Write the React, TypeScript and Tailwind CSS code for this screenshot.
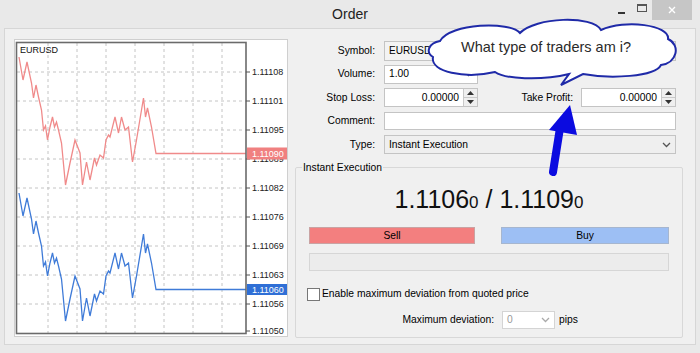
import React from "react";

const FONT = { fontFamily: '"Liberation Sans", Arial, sans-serif' };

// price path of the red (ask) line, in page pixels
const RED: [number, number][] = [
  [19, 57], [23, 80], [27, 62], [31.5, 83], [33.5, 98], [36, 85], [38.5, 97], [41.5, 110],
  [43.5, 130], [45.5, 126], [47.5, 140], [50, 127], [52.5, 117], [54.5, 127], [56.5, 122],
  [58.5, 130], [61.5, 143], [65.5, 185], [70, 163], [75, 140], [80, 153], [82.5, 185],
  [86.5, 162], [90, 180], [94.5, 158], [96.5, 165], [100, 155], [103.5, 158], [106, 140],
  [108.5, 135], [110, 137], [115, 117], [118.5, 133], [121.5, 117], [125, 130], [128.5, 127],
  [132.5, 162], [136.5, 140], [143.5, 98], [145.5, 117], [147.5, 108], [151.5, 127],
  [156, 153.5], [246, 153.5],
];
const toPts = (dy: number) => RED.map(([x, y]) => `${x},${y + dy}`).join(" ");

const GRID_X = [48, 77, 106, 135, 164, 193, 222];
const LABELS: [string, number][] = [
  ["1.11108", 72], ["1.11101", 101], ["1.11095", 130], ["1.11089", 159], ["1.11082", 188],
  ["1.11076", 217], ["1.11069", 246], ["1.11063", 275], ["1.11056", 304],
];

function Chart() {
  return (
    <div className="w-[274px] h-[298px] border border-[#cfcfcf] bg-white">
      <svg width="272" height="296" viewBox="15 40 272 296" style={FONT}>
        {GRID_X.map((x) => (
          <line key={x} x1={x} y1={43} x2={x} y2={333} stroke="#c4c4c4" strokeDasharray="3 3" />
        ))}
        {LABELS.map(([, y]) => (
          <line key={y} x1={17} y1={y} x2={246} y2={y} stroke="#c4c4c4" strokeDasharray="3 3" />
        ))}
        <polyline points={toPts(0)} fill="none" stroke="#f08a8a" strokeWidth="1.3" />
        <polyline points={toPts(136)} fill="none" stroke="#3f7bd8" strokeWidth="1.3" />
        <rect x="16.5" y="42.5" width="229.5" height="291" fill="none" stroke="#6b6b6b" strokeWidth="1.6" />
        {LABELS.map(([t, y]) => (
          <g key={t}>
            <line x1={246} y1={y} x2={250} y2={y} stroke="#555" />
            <text x={252} y={y + 3} fontSize="9" fill="#222">{t}</text>
          </g>
        ))}
        <line x1={246} y1={331} x2={250} y2={331} stroke="#555" />
        <text x={252} y={334} fontSize="9" fill="#222">1.11050</text>
        <rect x="247" y="147.5" width="40" height="12" fill="#f08080" />
        <text x={252} y={157} fontSize="9" fill="#fff">1.11090</text>
        <rect x="247" y="284" width="40" height="11" fill="#2f6fd6" />
        <text x={252} y={293} fontSize="9" fill="#fff">1.11060</text>
        <text x={20} y={53} fontSize="9" fill="#111">EURUSD</text>
      </svg>
    </div>
  );
}

function Chevron({ color = "#555" }: { color?: string }) {
  return (
    <svg width="9" height="6" viewBox="0 0 9 6">
      <path d="M1 1l3.5 3.5L8 1" fill="none" stroke={color} strokeWidth="1.3" />
    </svg>
  );
}

function Spinner() {
  return (
    <div className="w-[14px] h-full flex flex-col border-l border-[#c9c9c9] bg-[#efefef]">
      <div className="flex-1 flex items-center justify-center border-b border-[#c9c9c9]">
        <svg width="7" height="4" viewBox="0 0 7 4"><path d="M0 4L3.5 0L7 4z" fill="#333" /></svg>
      </div>
      <div className="flex-1 flex items-center justify-center">
        <svg width="7" height="4" viewBox="0 0 7 4"><path d="M0 0L3.5 4L7 0z" fill="#333" /></svg>
      </div>
    </div>
  );
}

function Row({ label, children }: { label: string; children: React.ReactNode }) {
  return (
    <div className="flex items-center h-[19px]">
      <span className="w-[81px] shrink-0 pr-[1px] text-right">{label}</span>
      <div className="ml-[8px] flex-1 flex items-center h-full">{children}</div>
    </div>
  );
}

function Cloud() {
  return (
    <div className="absolute left-[425px] top-[17px] w-[255px] h-[72px]">
      <svg className="absolute inset-0" width="255" height="72" viewBox="0 0 255 72">
        <path
          d="M15 24 C25 6 85 4 95 16 C110 0 168 -2 176 13 C200 2 245 8 243 22 C256 28 252 46 236 48 C230 60 185 62 158 57 L136 68 L144 57 C115 64 80 62 70 55 C40 62 5 55 8 40 C0 35 4 26 15 24 Z"
          fill="#fff"
          stroke="#1f2aa8"
          strokeWidth="2"
        />
      </svg>
      <div className="absolute left-[36px] top-[20px] text-[14.5px] text-[#2a2a2a] whitespace-nowrap">
        What type of traders am i?
      </div>
    </div>
  );
}

function Arrow() {
  return (
    <svg className="absolute left-[540px] top-[100px]" width="45" height="80" viewBox="540 100 45 80">
      <path d="M553 172 L560 128" stroke="#0b0be0" strokeWidth="8" strokeLinecap="round" />
      <path d="M570 105 L549 130 L577 135 Z" fill="#0b0be0" />
    </svg>
  );
}

export default function App() {
  return (
    <div className="relative w-[700px] h-[353px] overflow-hidden bg-[#e9e9e9] text-[10.3px] text-black" style={FONT}>
      {/* title bar */}
      <div className="relative h-[28px] flex items-center justify-center">
        <span className="text-[14px] text-[#222]">Order</span>
        <div className="absolute right-[8px] top-0 flex items-start">
          <div className="w-[22px] h-[20px] flex items-center justify-center">
            <div className="w-[7px] h-[2px] bg-[#333] mt-[5px]" />
          </div>
          <div className="w-[20px] h-[20px] flex items-center justify-center">
            <div className="w-[10px] h-[8px] border border-[#555] border-t-2 -mt-[4px]" />
          </div>
          <div className="w-[40px] h-[20px] bg-[#c6c6c6] flex items-center justify-center">
            <svg width="8" height="8" viewBox="0 0 8 8">
              <path d="M1 1L7 7M7 1L1 7" stroke="#fff" strokeWidth="1.4" />
            </svg>
          </div>
        </div>
      </div>

      {/* dialog body */}
      <div className="mx-[4px] h-[317px] border border-[#d6d6d6] bg-[#f0f0f0] flex pl-[9px] pt-[10px]">
        <Chart />

        <div className="ml-[7px] w-[388px] flex flex-col">
          <div className="flex flex-col gap-[4.5px] pt-[2px] pr-[7px]">
            <Row label="Symbol:">
              <div className="w-full h-[20px] border border-[#c4c4c4] bg-[#f3f3f3] flex items-center px-[4px] text-[10px]">
                EURUSD, Euro vs US Dollar
              </div>
            </Row>
            <Row label="Volume:">
              <div className="w-[94px] h-[19px] border border-[#c4c4c4] bg-white flex items-center justify-between px-[4px]">
                <span>1.00</span>
                <Chevron />
              </div>
            </Row>
            <Row label="Stop Loss:">
              <div className="w-[94px] shrink-0 h-[19px] border border-[#c4c4c4] bg-white flex items-center">
                <span className="flex-1 text-right pr-[4px]">0.00000</span>
                <Spinner />
              </div>
              <span className="w-[95px] shrink-0 text-right">Take Profit:</span>
              <div className="ml-[8px] w-[95px] shrink-0 h-[19px] border border-[#c4c4c4] bg-white flex items-center">
                <span className="flex-1 text-right pr-[4px]">0.00000</span>
                <Spinner />
              </div>
            </Row>
            <Row label="Comment:">
              <div className="w-full h-[18px] border border-[#c4c4c4] bg-white" />
            </Row>
            <Row label="Type:">
              <div className="w-full h-[19px] border border-[#c4c4c4] bg-[#efefef] flex items-center justify-between px-[4px]">
                <span>Instant Execution</span>
                <Chevron />
              </div>
            </Row>
          </div>

          <fieldset className="mt-[6px] h-[178px] border border-[#d8d8d8] rounded-[2px] px-[13px] pt-0">
            <legend className="ml-[-7px] px-[1px]">Instant Execution</legend>
            <div className="text-center text-[25px] leading-[28px] text-[#111] mt-[10px]">
              1.1106<span className="text-[17px]">0</span> / 1.1109<span className="text-[17px]">0</span>
            </div>
            <div className="mt-[10px] flex justify-between">
              <div className="w-[166px] h-[17px] bg-[#f37f7f] border border-[#c9a3a3] flex items-center justify-center">
                Sell
              </div>
              <div className="w-[168px] h-[17px] bg-[#9dbff4] border border-[#a6b6cf] flex items-center justify-center">
                Buy
              </div>
            </div>
            <div className="mt-[9px] h-[18px] border border-[#d6d6d6] bg-[#ececec]" />
            <div className="mt-[15px] -ml-[2px] flex items-center">
              <div className="w-[13px] h-[13px] border border-[#777] bg-white" />
              <span className="ml-[2px]">Enable maximum deviation from quoted price</span>
            </div>
            <div className="mt-[9px] flex items-center">
              <span className="w-[185px] text-right">Maximum deviation:</span>
              <div className="ml-[8px] w-[53px] h-[18px] border border-[#d4d4d4] bg-white flex items-center justify-between px-[4px] text-[#9a9a9a]">
                <span>0</span>
                <Chevron color="#aaa" />
              </div>
              <span className="ml-[4px]">pips</span>
            </div>
          </fieldset>
        </div>
      </div>

      <Cloud />
      <Arrow />
    </div>
  );
}
